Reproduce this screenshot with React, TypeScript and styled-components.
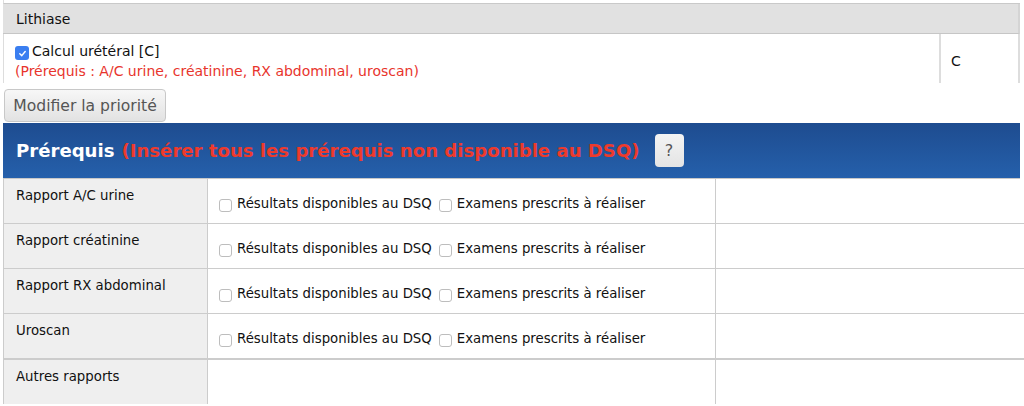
import React from 'react'
import styled, { createGlobalStyle } from 'styled-components';

const MainFont = '"DejaVu Sans", Verdana, sans-serif';

const GlobalStyle = createGlobalStyle`
  body {
    margin: 0;
    background: #fff;
    font-family: ${MainFont};
    font-size: 13.3px;
    color: #111;
  }
`;

const prereqs = ['Rapport A/C urine', 'Rapport créatinine', 'Rapport RX abdominal', 'Uroscan'];

const CheckIcon = () => (
  <svg width="9" height="9" viewBox="0 0 10 10">
    <path d="M2 5.2 L4.2 7.4 L8 2.8" fill="none" stroke="#fff" strokeWidth="1.6" strokeLinecap="round" strokeLinejoin="round" />
  </svg>
)

export default function App() {
  return (
    <Page>
      <GlobalStyle />
      <TopTable>
        <TopStrip />
        <GroupRow>Lithiase</GroupRow>
        <ItemRow>
          <ItemCell>
            <ItemLine>
              <BlueBox><CheckIcon /></BlueBox>
              Calcul urétéral [C]
            </ItemLine>
            <RedText>(Prérequis : A/C urine, créatinine, RX abdominal, uroscan)</RedText>
          </ItemCell>
          <PriorityCell>C</PriorityCell>
        </ItemRow>
      </TopTable>
      <GrayButton>Modifier la priorité</GrayButton>
      <Header>
        <HeaderTitle>Prérequis</HeaderTitle>
        <HeaderNote>(Insérer tous les prérequis non disponible au DSQ)</HeaderNote>
        <HelpButton>?</HelpButton>
      </Header>
      <Grid>
        {prereqs.map((name) => (
          <React.Fragment key={name}>
            <LabelCell>{name}</LabelCell>
            <OptionCell>
              <Option><Box />Résultats disponibles au DSQ</Option>
              <Option><Box />Examens prescrits à réaliser</Option>
            </OptionCell>
            <EmptyCell />
          </React.Fragment>
        ))}
        <LabelCell last>Autres rapports</LabelCell>
        <OptionCell last />
        <EmptyCell last />
      </Grid>
    </Page>
  )
}

const Page = styled.div`
  padding: 0 4px 0 3px;
`;

const TopTable = styled.div`
  display: flex;
  flex-direction: column;
  font-size: 14px;
`;

const TopStrip = styled.div`
  height: 3px;
  border-left: 1px solid #ddd;
  border-bottom: 1px solid #c9c9c9;
`;

const GroupRow = styled.div`
  height: 29px;
  background: #e1e1e1;
  border-bottom: 1px solid #c6c6c6;
  border-right: 2px solid #d4d4d4;
  display: flex;
  align-items: center;
  padding-left: 13px;
`;

const ItemRow = styled.div`
  display: grid;
  grid-template-columns: 935px 80px;
  height: 49px;
  border-left: 1px solid #ddd;
  border-right: 2px solid #ddd;
`;

const ItemCell = styled.div`
  padding: 9px 0 0 11px;
  display: flex;
  flex-direction: column;
`;

const ItemLine = styled.div`
  display: flex;
  align-items: center;
  gap: 3px;
  line-height: 17px;
`;

const BlueBox = styled.span`
  width: 14px;
  height: 14px;
  border-radius: 3px;
  background: #3a7ef0;
  display: inline-flex;
  align-items: center;
  justify-content: center;
  margin-top: 3px;
`;

const RedText = styled.div`
  color: #e8342c;
  line-height: 17px;
  margin-top: 3px;
`;

const PriorityCell = styled.div`
  border-left: 2px solid #ddd;
  display: flex;
  align-items: center;
  padding-left: 10px;
  padding-top: 4px;
`;

const GrayButton = styled.button`
  display: block;
  margin: 6px 0 1px 1px;
  width: 162px;
  height: 33px;
  border: 1px solid #c8c8c8;
  border-radius: 4px;
  background: linear-gradient(#f7f7f7, #e2e2e2);
  color: #555;
  font-family: ${MainFont};
  font-size: 15.6px;
  padding: 0;
`;

const Header = styled.div`
  height: 56px;
  background: linear-gradient(#1e4c90, #2560ab);
  display: flex;
  align-items: center;
  padding-left: 13px;
  gap: 7px;
  border-bottom: 1px solid #c8c8c8;
  box-sizing: border-box;
`;

const HeaderTitle = styled.span`
  color: #fff;
  font-weight: bold;
  font-size: 18.1px;
`;

const HeaderNote = styled.span`
  color: #ee3a2c;
  font-weight: bold;
  font-size: 18.1px;
`;

const HelpButton = styled.span`
  margin-left: 8px;
  width: 29px;
  height: 33px;
  border-radius: 4px;
  background: linear-gradient(#f4f4f4, #e4e4e4);
  color: #555;
  font-size: 16px;
  display: flex;
  align-items: center;
  justify-content: center;
`;

const Grid = styled.div`
  display: grid;
  grid-template-columns: 204px 508px 1fr;
  grid-auto-rows: 45px;
  border-left: 1px solid #ccc;
  margin-right: -4px;
`;

interface CellArgs {
  last?: boolean;
}

const LabelCell = styled.div<CellArgs>`
  background: #efefef;
  border-right: 1px solid #ccc;
  border-bottom: 1px solid #ccc;
  border-top: ${(p) => (p.last ? '2px solid #ccc' : 'none')};
  margin-top: ${(p) => (p.last ? '-1px' : '0')};
  padding: 9px 0 0 12px;
  box-sizing: border-box;
  ${(p) => p.last && 'height: 60px;'}
`;

const OptionCell = styled.div<CellArgs>`
  border-right: 1px solid #ccc;
  border-bottom: 1px solid #ccc;
  border-top: ${(p) => (p.last ? '2px solid #ccc' : 'none')};
  margin-top: ${(p) => (p.last ? '-1px' : '0')};
  display: flex;
  align-items: center;
  gap: 7px;
  padding: 5px 0 0 11px;
  box-sizing: border-box;
  ${(p) => p.last && 'height: 60px;'}
`;

const EmptyCell = styled.div<CellArgs>`
  border-bottom: 1px solid #ccc;
  border-top: ${(p) => (p.last ? '2px solid #ccc' : 'none')};
  margin-top: ${(p) => (p.last ? '-1px' : '0')};
  box-sizing: border-box;
  ${(p) => p.last && 'height: 60px;'}
`;

const Option = styled.label`
  display: flex;
  align-items: center;
  gap: 5px;
`;

const Box = styled.span`
  width: 11px;
  height: 11px;
  border: 1px solid #bdbdbd;
  border-radius: 3px;
  background: #fff;
  margin-top: 3px;
`;
